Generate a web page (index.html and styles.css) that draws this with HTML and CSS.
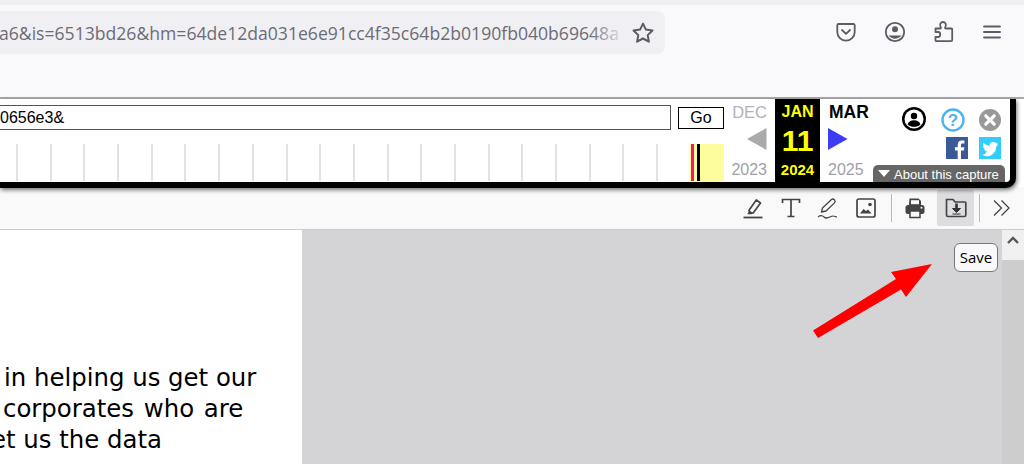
FILE: index.html
```html
<!DOCTYPE html>
<html lang="en">
<head>
<meta charset="utf-8">
<title>Capture</title>
<link rel="stylesheet" href="styles.css">
</head>
<body>
<header class="chrome">
  <div class="tabstrip"></div>
  <div class="navbar">
    <div class="urlbar">
      <span class="url">a6&amp;is=6513bd26&amp;hm=64de12da031e6e91cc4f35c64b2b0190fb040b69648a</span>
      <span class="urlfade"></span>
      <svg class="star" width="24" height="24" viewBox="0 0 24 24"><path d="M12 2.600l2.900 6 6.600.9-4.800 4.600 1.200 6.600-5.900-3.200-5.900 3.200 1.200-6.600L2.500 9.500l6.600-.9z" fill="none" stroke="#5b5b66" stroke-width="2" stroke-linejoin="round"/></svg>
    </div>
    <div class="navicons">
      <svg width="20" height="20" viewBox="0 0 20 20"><path d="M2.500 2h15a1.200 1.200 0 0 1 1.200 1.200V10a8.700 8.700 0 0 1-17.400 0V3.200A1.200 1.200 0 0 1 2.500 2z" fill="none" stroke="#5b5b66" stroke-width="1.800"/><path d="M6 8l4 3.800L14 8" fill="none" stroke="#5b5b66" stroke-width="1.800" stroke-linecap="round" stroke-linejoin="round"/></svg>
      <svg width="22" height="22" viewBox="0 0 22 22"><circle cx="11" cy="11" r="9.200" fill="none" stroke="#5b5b66" stroke-width="1.800"/><circle cx="11" cy="8.300" r="3" fill="#5b5b66"/><path d="M4.800 14.400h12.400a7.400 7.400 0 0 1-12.400 0z" fill="#5b5b66"/></svg>
      <svg width="22" height="22" viewBox="0 0 22 22"><path d="M2.500 12V8.500h4.600c.8 0 1-.6.6-1.200-1.600-2.500.1-5.300 2.300-5.300s3.900 2.800 2.300 5.300c-.4.600-.2 1.200.6 1.200h5.600a.7.700 0 0 1 .7.700v10.800a1.200 1.200 0 0 1-1.200 1.200H3.400a.9.900 0 0 1-.9-.9V17h2.700c2.700 0 2.700-5 0-5z" transform="translate(0 -1)" fill="none" stroke="#5b5b66" stroke-width="1.800" stroke-linejoin="round"/></svg>
      <svg width="18" height="16" viewBox="0 0 18 16"><path d="M1 2.500h16M1 8h16M1 13.500h16" stroke="#5b5b66" stroke-width="1.800" stroke-linecap="round"/></svg>
    </div>
  </div>
</header>

<section class="wayback">
  <div class="wb-left">
    <form class="wb-form">
      <div class="wb-input">0656e3&amp;</div>
      <div class="wb-go">Go</div>
    </form>
    <div class="wb-ticks">
      <i></i><i></i><i></i><i></i><i></i><i></i><i></i><i></i><i></i><i></i><i></i><i></i><i></i><i></i><i></i><i></i><i></i><i></i><i></i><i></i>
      <div class="wb-capture"><b class="pink"></b><b class="blk"></b></div>
    </div>
  </div>
  <div class="month month-prev">
    <span class="m-name">DEC</span>
    <svg class="m-arrow" width="20" height="22" viewBox="0 0 20 22"><path d="M19.500 0v22L0 11z" fill="#aaa"/></svg>
    <span class="m-year">2023</span>
  </div>
  <div class="month month-cur">
    <span class="c-name">JAN</span>
    <span class="c-day">11</span>
    <span class="c-year">2024</span>
  </div>
  <div class="month month-next">
    <span class="n-name">MAR</span>
    <svg class="m-arrow" width="20" height="22" viewBox="0 0 20 22"><path d="M0 0v22l19.500-11z" fill="#3c3cf5"/></svg>
    <span class="m-year">2025</span>
  </div>
  <div class="wb-right">
    <div class="wb-icons">
      <svg class="ic-user" width="24" height="24" viewBox="0 0 24 24"><circle cx="12" cy="12" r="12"/><circle cx="12" cy="12" r="9.500" fill="#fff"/><circle cx="12" cy="9" r="3.200"/><path d="M5.500 17.500c1-3.200 3.500-4.200 6.500-4.200s5.500 1 6.500 4.200c-1.800 1.500-4 2.300-6.500 2.300s-4.700-.8-6.500-2.300z"/></svg>
      <div class="wb-col">
        <svg width="24" height="24" viewBox="0 0 24 24"><circle cx="12" cy="12" r="10.500" fill="#fff" stroke="#4db3f0" stroke-width="2.400"/><text x="12" y="18" text-anchor="middle" class="q">?</text></svg>
        <svg class="ic-fb" width="22" height="22" viewBox="0 0 22 22"><rect width="22" height="22" fill="#3b5998"/><path d="M15 22v-8.500h2.900l.4-3.300H15V8.100c0-1 .3-1.600 1.700-1.600h1.700V3.600c-.3 0-1.300-.1-2.500-.1-2.500 0-4.200 1.500-4.200 4.300v2.400H8.900v3.300h2.800V22z" fill="#fff"/></svg>
      </div>
      <div class="wb-col">
        <svg width="22" height="22" viewBox="0 0 22 22"><circle cx="11" cy="11" r="11" fill="#999"/><path d="M6.800 6.800l8.400 8.400M15.200 6.800l-8.400 8.400" stroke="#fff" stroke-width="3.200" stroke-linecap="round"/></svg>
        <svg width="22" height="22" viewBox="0 0 22 22"><rect width="22" height="22" fill="#33ccff"/><path d="M18.500 6.300c-.6.300-1.200.4-1.800.5.600-.4 1.100-1 1.400-1.700-.6.400-1.300.6-2 .8a3.100 3.100 0 0 0-5.300 2.800c-2.600-.1-4.900-1.400-6.400-3.300-.8 1.400-.4 3.200 1 4.100-.5 0-1-.2-1.400-.4 0 1.500 1.100 2.800 2.500 3.100-.5.100-.9.100-1.400 0 .4 1.200 1.500 2.100 2.900 2.200A6.300 6.300 0 0 1 3.400 17.700a8.900 8.900 0 0 0 13.700-7.900c.6-.4 1-.9 1.400-1.500z" fill="#fff"/></svg>
      </div>
    </div>
    <div class="wb-about"><span class="tri"></span>About this capture</div>
  </div>
</section>

<div class="pdfbar">
  <div class="tool"><svg width="22" height="22" viewBox="0 0 22 22"><path d="M7 13.200L14.300 3l4.200 3-7.300 10H7.800z" fill="none" stroke="#444" stroke-width="1.700" stroke-linejoin="round"/><path d="M7.500 13.500l3.500 2.500-1.500 1.200H5.200z" fill="#444"/><path d="M1.500 20.500h19" stroke="#444" stroke-width="1.800"/></svg></div>
  <div class="tool"><svg width="22" height="22" viewBox="0 0 22 22"><path d="M2.500 6V2.500h17V6M11 2.500v17M7.500 19.500h7" fill="none" stroke="#444" stroke-width="1.700"/></svg></div>
  <div class="tool"><svg width="22" height="22" viewBox="0 0 22 22"><path d="M4.500 15l1-4L14.500 2.500c1-.8 2.200-.5 3 .4s.9 2 0 3L9 14z" fill="none" stroke="#444" stroke-width="1.300" stroke-linejoin="round"/><path d="M1 20c2.500-2 4-2 6 0s4 1 7-.5 4 .5 6 .5" fill="none" stroke="#444" stroke-width="1.100"/></svg></div>
  <div class="tool"><svg width="22" height="22" viewBox="0 0 22 22"><rect x="2" y="2" width="18" height="18" rx="2" fill="none" stroke="#444" stroke-width="1.700"/><path d="M5 16.500l3.500-4.500 2.500 2 2-1.500 3.500 4z" fill="#444"/><circle cx="15" cy="7.500" r="1.800" fill="#444"/></svg></div>
  <span class="tsep sep-a"></span>
  <div class="tool"><svg width="22" height="22" viewBox="0 0 22 22"><path d="M5.500 1.500h9l2.500 2.500v4H5z" fill="#444"/><rect x="7" y="3.200" width="8" height="4" fill="#f9f9fa"/><rect x="1.500" y="8" width="19" height="9" rx="2.500" fill="#444"/><rect x="6" y="14" width="10" height="6.500" fill="#f9f9fa" stroke="#444" stroke-width="1.500"/><circle cx="17.500" cy="10.800" r="1" fill="#f9f9fa"/></svg></div>
  <div class="tool tool-on"><svg width="22" height="22" viewBox="0 0 22 22"><path d="M1.500 2.500h6.500l2 2.500h10a.8.800 0 0 1 .8.800V18a1.500 1.500 0 0 1-1.500 1.500H3A1.500 1.500 0 0 1 1.500 18z" fill="none" stroke="#444" stroke-width="1.700" stroke-linejoin="round"/><path d="M11.500 6.500v6" stroke="#333" stroke-width="2.600"/><path d="M7.500 11.500h8L11.500 15.500zM7.500 17h8" fill="#333" stroke="#333" stroke-width="1"/></svg></div>
  <span class="tsep sep-b"></span>
  <div class="tool tool-last"><svg width="20" height="20" viewBox="0 0 20 20"><path d="M2 2.500l7.500 7.500L2 17.500M9.500 2.500L17 10l-7.500 7.500" fill="none" stroke="#444" stroke-width="1.300"/></svg></div>
</div>

<main class="viewer">
  <article class="sheet">
    <p class="ln ln1">in helping us get our</p>
    <p class="ln ln2">corporates who are</p>
    <p class="ln ln3">et us the data</p>
  </article>
  <div class="backdrop">
    <svg class="arrow" width="119" height="74" viewBox="0 0 119 74"><path d="M0 66.500L83 15 78 8 119 0 93 33 88 25.500 5 74z" fill="#fe0000"/></svg>
    <button class="save">Save</button>
  </div>
  <div class="scroll"><div class="scroll-up"><svg width="12" height="8" viewBox="0 0 12 8"><path d="M1 7l5-5 5 5" fill="none" stroke="#555" stroke-width="2.400"/></svg></div></div>
</main>
</body>
</html>
```
FILE: styles.css
```css
* { box-sizing: border-box; }
html, body { margin: 0; padding: 0; }
body { width: 1024px; height: 464px; overflow: hidden; background: #fff; font-family: "Liberation Sans", Arial, sans-serif; display: flex; flex-direction: column; }
svg { display: block; flex: none; }

.chrome { height: 99px; flex: none; background: #f9f9fb; border-bottom: 2px solid #aaa; }
.tabstrip { height: 5px; background: #f0f0f4; }
.navbar { display: flex; align-items: flex-start; padding-top: 6px; }
.urlbar { width: 665px; height: 43px; background: #f0f0f4; border-radius: 0 8px 8px 0; display: flex; align-items: center; position: relative; overflow: hidden; }
.url { font-family: "Open Sans", sans-serif; font-size: 17.6px; color: #6c6c74; white-space: nowrap; width: 631px; overflow: hidden; flex: none; margin-left: -1px; }
.urlfade { position: absolute; left: 590px; top: 0; width: 36px; height: 100%; background: linear-gradient(to right, rgba(240,240,244,0), #f0f0f4); }
.star { margin-left: 1px; }
.navicons { display: flex; align-items: center; margin-left: 171px; height: 43px; margin-top: -1px; }
.navicons svg:nth-child(1) { margin-right: 28px; }
.navicons svg:nth-child(2) { margin-right: 27px; }
.navicons svg:nth-child(3) { margin-right: 28px; }

.wayback { flex: none; width: 1016px; height: 89px; background: #fff; border-right: 6px solid #000; border-bottom: 6px solid #000; border-bottom-right-radius: 10px; box-shadow: 1px 2px 4px rgba(0,0,0,.55); display: flex; position: relative; }
.wb-left { width: 724px; flex: none; display: flex; flex-direction: column; }
.wb-form { display: flex; align-items: flex-start; padding-top: 6px; height: 45px; }
.wb-input { width: 671px; height: 25px; border: 1px solid #555; border-left: 0; background: #fff; font-size: 16px; line-height: 23px; color: #000; }
.wb-go { width: 46px; height: 22px; margin: 2px 0 0 7px; border: 1px solid #000; font-size: 16px; line-height: 20px; text-align: center; }
.wb-ticks { flex: 1; margin-bottom: 1px; display: flex; padding-left: 16px; gap: 31.7px; position: relative; }
.wb-ticks i { width: 2px; background: #e2e2e2; flex: none; }
.wb-capture { position: absolute; left: 689px; top: 0; bottom: 0; width: 35px; background: #fdfd9e; }
.pink { position: absolute; left: 2px; top: 0; bottom: 0; width: 3px; background: #f5186e; }
.blk { position: absolute; left: 8px; top: 0; bottom: 0; width: 3px; background: #000; }

.month { display: flex; flex-direction: column; flex: none; height: 83px; }
.month-prev { width: 51px; align-items: flex-end; padding: 5px 8px 0 0; }
.m-name { font-size: 16.5px; line-height: 17px; color: #b0b0c0; }
.m-arrow { margin-top: 7px; }
.m-year { font-size: 16px; line-height: 18px; margin-top: 11px; color: #a0a0a8; }
.month-cur { width: 45px; background: #000; color: #ff0; align-items: center; font-weight: 700; }
.c-name { font-size: 16px; line-height: 18px; margin-top: 4px; }
.c-day { font-size: 30px; line-height: 34px; margin-top: 3px; }
.c-year { font-size: 15px; line-height: 18px; margin-top: 3px; }
.month-next { width: 53px; align-items: flex-start; padding: 4px 0 0 9px; }
.n-name { font-size: 17.500px; line-height: 18px; font-weight: 700; color: #000; }
.month-next .m-arrow { margin-left: -1px; }
.month-next .m-year { margin-top: 11px; margin-left: -1px; }

.wb-right { flex: 1; display: flex; flex-direction: column; height: 83px; }
.wb-icons { display: flex; flex: 1; padding: 8px 0 0 29px; }
.ic-user { margin-right: 15px; }
.wb-col { display: flex; flex-direction: column; align-items: center; width: 24px; gap: 5px; padding-top: 1px; }
.ic-fb { margin-left: 8px; flex: none; }
.wb-col:last-child { margin-left: 13px; gap: 6px; padding-top: 2px; }
.q { font: 700 17px "Liberation Sans", sans-serif; fill: #4db3f0; }
.wb-about { height: 17px; width: 132px; background: #666; color: #fff; border-radius: 5px 5px 0 0; font-size: 13px; line-height: 17px; display: flex; align-items: center; padding: 2px 0 0 5px; }
.tri { width: 0; height: 0; border: 6px solid transparent; border-top: 7px solid #fff; border-bottom: 0; margin: -2px 4px 0 0; }

.pdfbar { flex: none; height: 43px; margin-top: -1px; background: #f9f9fa; border-bottom: 1px solid #ccc; display: flex; align-items: center; justify-content: flex-end; padding-right: 4px; }
.tool { width: 37.5px; height: 36px; display: flex; align-items: center; justify-content: center; border-radius: 2px; }
.tool-on { background: #dddde0; width: 37px; margin-left: 3px; }
.tsep { width: 1px; height: 28px; background: #bbb; flex: none; }
.tsep.sep-a { margin: 0 5px 0 6px; }
.tsep.sep-b { margin: 0 4px 0 5px; }
.tool-last { width: 36px; }

.viewer { flex: 1; display: flex; min-height: 0; }
.sheet { width: 302px; flex: none; background: #fff; padding-top: 132px; overflow: hidden; font-family: "DejaVu Sans", sans-serif; font-size: 24.4px; line-height: 31.5px; color: #000; }
.ln { margin: 0; white-space: nowrap; }
.ln1 { padding-left: 4px; }
.ln2 { padding-left: 3px; word-spacing: 2px; margin-top: -1px; }
.ln3 { margin-left: -9px; }
.backdrop { flex: 1; background: #d4d4d7; position: relative; }
.arrow { position: absolute; left: 511px; top: 34px; }
.save { position: absolute; left: 652px; top: 13px; width: 44px; height: 29px; padding: 0 0 2px; background: #f9f9fb; border: 1px solid #777; border-radius: 6px; font-family: "Open Sans", sans-serif; font-size: 15px; color: #000; }
.scroll { width: 22px; flex: none; background: #cdcdcd; }
.scroll-up { height: 30px; background: #f0f0f0; display: flex; justify-content: center; padding-top: 6px; }
```
